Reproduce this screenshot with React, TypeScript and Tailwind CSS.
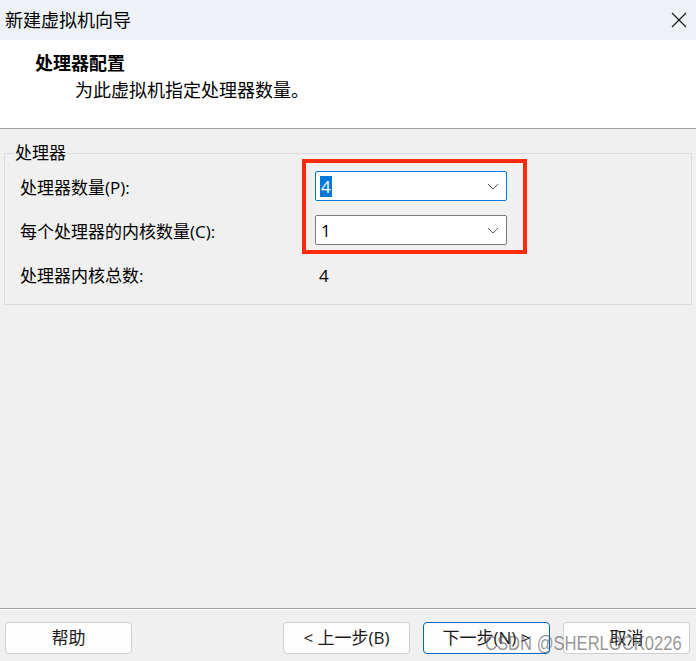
import React from 'react';

const font = '"Segoe UI", "Open Sans", "Noto Sans CJK SC", sans-serif';

function Chevron() {
  return (
    <svg width="12" height="7" viewBox="0 0 12 7" className="text-[#5a5a5a]">
      <path d="M1 1 L6 6 L11 1" fill="none" stroke="currentColor" strokeWidth="1" />
    </svg>
  );
}

function Combo({ value, focused }: { value: string; focused?: boolean }) {
  return (
    <div
      className={`h-[30px] w-[192px] bg-white rounded-[2px] border flex items-center justify-between pl-[4px] pr-[7px] ${
        focused ? 'border-[#0078d7]' : 'border-[#7a7a7a]'
      }`}
    >
      <span
        className={`text-[17px] leading-[21px] px-[1px] ${focused ? 'bg-[#0078d7] text-white' : 'text-black'}`}
      >
        {value}
      </span>
      <Chevron />
    </div>
  );
}

function Btn({ children, primary }: { children: React.ReactNode; primary?: boolean }) {
  return (
    <button
      className={`h-[32px] w-[127px] rounded-[4px] bg-[#fdfdfd] text-[17px] text-[#1a1a1a] border ${
        primary ? 'border-[#0067c0]' : 'border-[#d0d0d0]'
      }`}
    >
      {children}
    </button>
  );
}

export default function App() {
  return (
    <div
      className="relative w-[696px] h-[661px] overflow-hidden bg-[#f0f0f0] flex flex-col text-black"
      style={{ fontFamily: font }}
    >
      {/* Title bar */}
      <div className="h-[40px] bg-[#eef2f7] flex items-center justify-between pl-[5px] pr-[9px]">
        <span className="text-[18px]">新建虚拟机向导</span>
        <svg width="16" height="16" viewBox="0 0 16 16">
          <path d="M1 1 L15 15 M15 1 L1 15" stroke="#1a1a1a" strokeWidth="1.2" />
        </svg>
      </div>

      {/* Header */}
      <div className="h-[89px] bg-white border-b border-[#a0a0a0] pl-[35px] pt-[10px] flex flex-col">
        <span className="text-[18px] font-bold leading-[26px]">处理器配置</span>
        <span className="text-[18px] leading-[26px] pl-[40px] mt-[1px]">为此虚拟机指定处理器数量。</span>
      </div>

      {/* Body */}
      <div className="flex-1 px-[4px] pt-[13px]">
        <fieldset className="border border-[#dcdcdc] pl-[15px] pb-[8px]">
          <legend className="text-[17px] leading-[22px] -ml-[6px] px-[1px]">处理器</legend>
          <div className="grid grid-cols-[295px_192px] auto-rows-[44px] items-center text-[17px]">
            <span className="mt-[3px]">处理器数量(P):</span>
            <Combo value="4" focused />
            <span className="mt-[3px]">每个处理器的内核数量(C):</span>
            <Combo value="1" />
            <span className="mt-[3px]">处理器内核总数:</span>
            <span className="pl-[4px] mt-[3px]">4</span>
          </div>
        </fieldset>
      </div>

      {/* Footer */}
      <div className="h-[53px] border-t border-[#a0a0a0] pt-[13px] flex justify-between pl-[5px] pr-[6px]">
        <div className="absolute left-0 right-0 top-[609px] h-px bg-white" />
        <Btn>帮助</Btn>
        <div className="flex gap-[13px]">
          <Btn>&lt; 上一步(B)</Btn>
          <Btn primary>下一步(N) &gt;</Btn>
          <Btn>取消</Btn>
        </div>
      </div>

      {/* Annotation */}
      <div className="absolute left-[302px] top-[159px] w-[225px] h-[95px] border-[4px] border-[#ff2a0a]" />

      {/* Watermark */}
      <div
        className="absolute left-[485px] top-[631px] origin-left scale-x-[0.83] whitespace-nowrap text-[20px] leading-[24px] text-[#505050]/60 pointer-events-none"
        style={{ fontFamily: '"Liberation Sans", sans-serif' }}
      >
        CSDN @SHERLOCK0226
      </div>
    </div>
  );
}
